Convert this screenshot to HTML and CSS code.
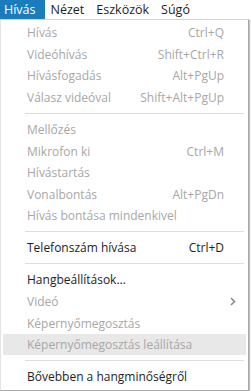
FILE: index.html
```html
<!DOCTYPE html>
<html lang="hu">
<head>
<meta charset="UTF-8">
<title>Hívás menü</title>
<link rel="stylesheet" href="styles.css">
</head>
<body>

<div class="menubar">
    <span class="menubar-item active">Hívás</span>
    <span class="menubar-item">Nézet</span>
    <span class="menubar-item">Eszközök</span>
    <span class="menubar-item">Súgó</span>
</div>

<div class="dropdown">
    <div class="item disabled"><span>Hívás</span><span class="key">Ctrl+Q</span></div>
    <div class="item disabled"><span>Videóhívás</span><span class="key">Shift+Ctrl+R</span></div>
    <div class="item disabled"><span>Hívásfogadás</span><span class="key">Alt+PgUp</span></div>
    <div class="item disabled"><span>Válasz videóval</span><span class="key">Shift+Alt+PgUp</span></div>
    <div class="separator"></div>
    <div class="item disabled"><span>Mellőzés</span></div>
    <div class="item disabled"><span>Mikrofon ki</span><span class="key">Ctrl+M</span></div>
    <div class="item disabled"><span>Hívástartás</span></div>
    <div class="item disabled"><span>Vonalbontás</span><span class="key">Alt+PgDn</span></div>
    <div class="item disabled"><span>Hívás bontása mindenkivel</span></div>
    <div class="separator"></div>
    <div class="item"><span>Telefonszám hívása</span><span class="key">Ctrl+D</span></div>
    <div class="separator"></div>
    <div class="item"><span>Hangbeállítások...</span></div>
    <div class="item disabled"><span>Videó</span>
        <svg class="arrow" width="6" height="9" viewBox="0 0 6 9"><path d="M1 1 L4.5 4.5 L1 8" fill="none" stroke="#8a8a8a" stroke-width="1.6"/></svg>
    </div>
    <div class="item disabled"><span>Képernyőmegosztás</span></div>
    <div class="item disabled hover"><span>Képernyőmegosztás leállítása</span></div>
    <div class="separator"></div>
    <div class="item"><span>Bővebben a hangminőségről</span></div>
</div>

</body>
</html>
```

FILE: styles.css
```css
body {
    margin: 0;
    width: 251px;
    height: 391px;
    background: #ffffff;
    font-family: "Open Sans", "Noto Sans", sans-serif;
    font-size: 12px;
    color: #1e1e1e;
    overflow: hidden;
}

.menubar {
    display: flex;
    height: 19px;
    align-items: stretch;
    font-size: 12.5px;
}

.menubar-item {
    display: flex;
    align-items: center;
    padding: 0 6px 0 6px;
    color: #1e1e1e;
}

.menubar-item.active {
    background-color: #1b7cbd;
    color: #ffffff;
    padding: 0 9px 0 4px;
}

.dropdown {
    width: 247px;
    height: 368px;
    border: 1px solid #a8a8a8;
    border-top-color: #d4d4d4;
    border-left-color: #e4e4e4;
    box-sizing: content-box;
    padding-top: 2px;
    box-shadow: 1px 1px 1px rgba(0, 0, 0, 0.25);
}

.item {
    display: flex;
    align-items: center;
    justify-content: space-between;
    height: 21.6px;
    margin: 0 2px;
    padding: 0 22px 0 24px;
}

.item.disabled {
    color: #a7a7a7;
}

.item.hover {
    background-color: #e8e8e8;
}

.key {
    text-align: right;
}

.arrow {
    margin-right: -12px;
}

.separator {
    height: 1px;
    margin: 4.7px 4px 4.7px 24px;
    background-color: #d9dfe3;
}
```
